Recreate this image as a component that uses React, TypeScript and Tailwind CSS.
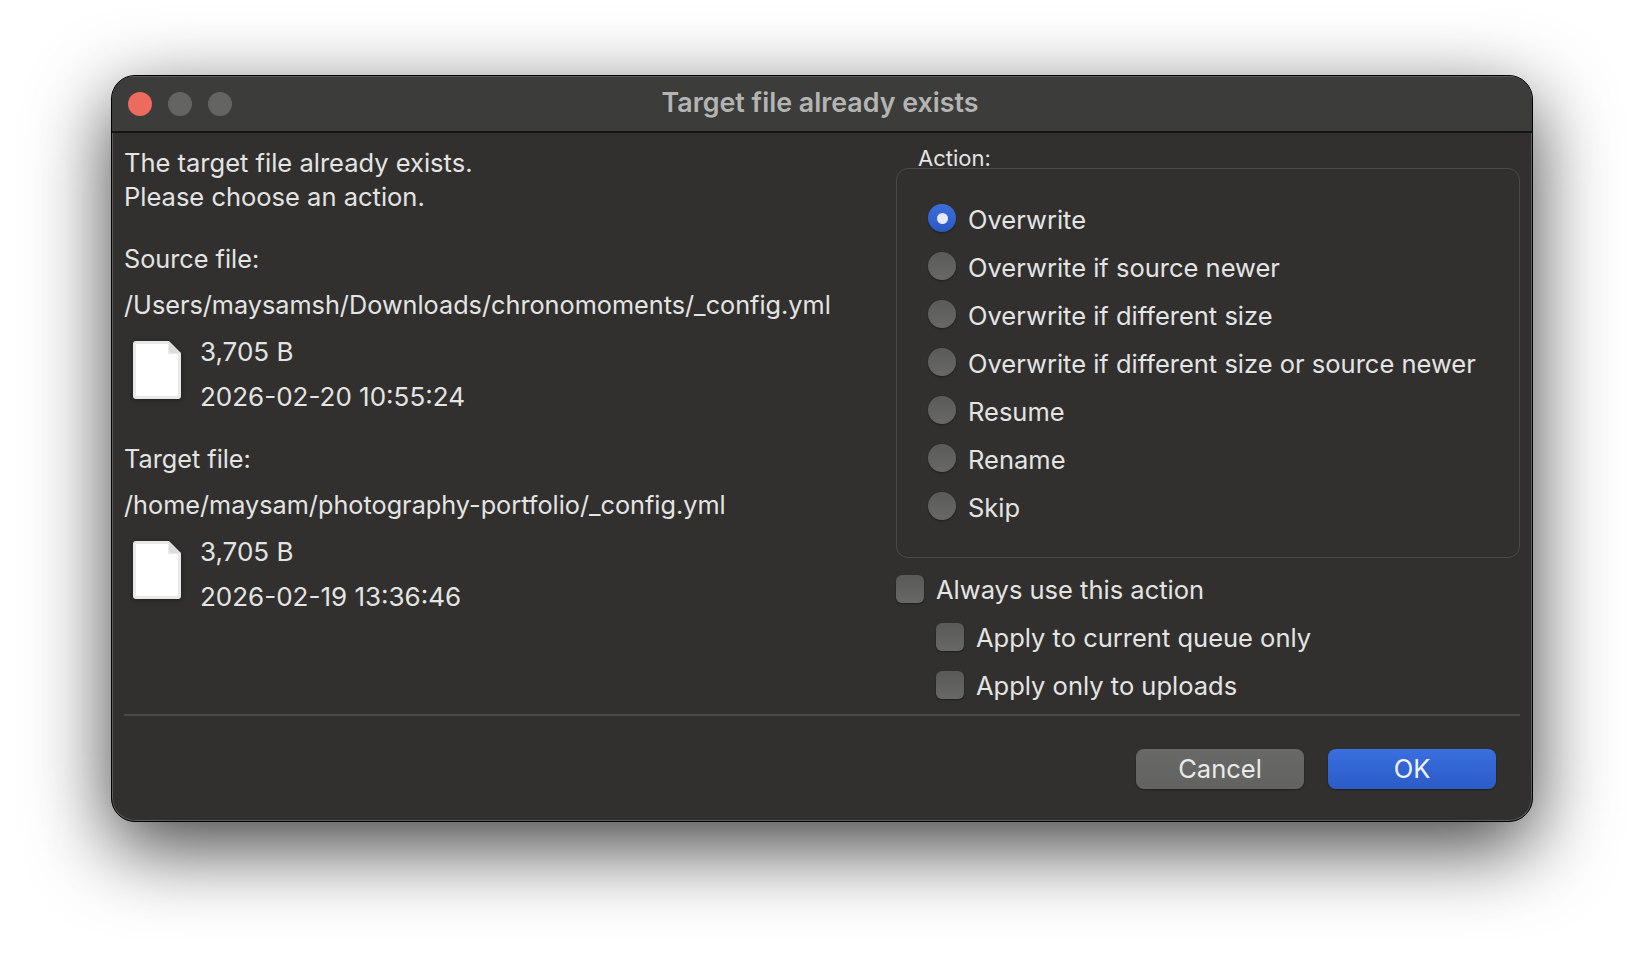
const radios = [
  "Overwrite",
  "Overwrite if source newer",
  "Overwrite if different size",
  "Overwrite if different size or source newer",
  "Resume",
  "Rename",
  "Skip",
];

function FileIcon() {
  return (
    <svg width="48" height="60" viewBox="0 0 48 60" className="mt-[12px] shrink-0 drop-shadow-[0_1px_2px_rgba(0,0,0,0.4)]">
      <path d="M3 0H36L48 12V55a3 3 0 0 1-3 3H3a3 3 0 0 1-3-3V3a3 3 0 0 1 3-3Z" fill="#e9e9e9" />
      <path d="M4 3H35V13H45V53a2 2 0 0 1-2 2H5a2 2 0 0 1-2-2V4a1 1 0 0 1 1-1Z" fill="#ffffff" />
      <path d="M36 1L47 12H38a2 2 0 0 1-2-2Z" fill="#dcdcdc" />
    </svg>
  );
}

function Radio({ checked, label }: { checked?: boolean; label: string }) {
  return (
    <div className="flex h-12 items-center gap-3">
      {checked ? (
        <span className="flex h-7 w-7 items-center justify-center rounded-full bg-gradient-to-b from-[#3c6fdc] to-[#2a58c0] shadow-[0_1px_2px_rgba(0,0,0,0.4)]">
          <span className="h-[11px] w-[11px] rounded-full bg-[#e4eafa]" />
        </span>
      ) : (
        <span className="h-7 w-7 rounded-full bg-gradient-to-b from-[#5a5a59] to-[#686867] shadow-[0_1px_2px_rgba(0,0,0,0.4)]" />
      )}
      <span className="mt-[4px]">{label}</span>
    </div>
  );
}

function Check({ label }: { label: string }) {
  return (
    <div className="flex h-12 items-center gap-3">
      <span className="h-7 w-7 rounded-md bg-gradient-to-b from-[#5a5a59] to-[#686867] shadow-[0_1px_2px_rgba(0,0,0,0.4)]" />
      <span className="mt-[2px]">{label}</span>
    </div>
  );
}

function FileBlock({ title, path, size, date }: { title: string; path: string; size: string; date: string }) {
  return (
    <div>
      <div className="flex h-[46px] items-center text-[25.25px]">{title}</div>
      <div className="flex h-[46px] items-center text-[25.25px]">{path}</div>
      <div className="flex items-start gap-[19px] pl-[9px]">
        <FileIcon />
        <div className="text-[26px]">
          <div className="flex h-[45px] items-center">{size}</div>
          <div className="flex h-[45px] items-center">{date}</div>
        </div>
      </div>
    </div>
  );
}

export default function App() {
  return (
    <div className="h-[970px] w-[1644px] overflow-hidden bg-white pl-[111px] pt-[75px] font-['Inter',sans-serif] text-[25.5px] text-[#e4e4e3]">
      <div className="flex h-[747px] w-[1422px] flex-col overflow-hidden rounded-3xl border border-black bg-[#31302f] shadow-[0_25px_80px_rgba(0,0,0,0.75),inset_0_0_0_1px_#5c5c5c]">
        <div className="flex h-[57px] shrink-0 items-center border-b-2 border-[#141414] bg-[#3c3c3b] px-4 shadow-[inset_0_1px_0_#5c5c5c]">
          <div className="flex gap-4">
            <span className="h-6 w-6 rounded-full bg-[#ec6a5e]" />
            <span className="h-6 w-6 rounded-full bg-[#646463]" />
            <span className="h-6 w-6 rounded-full bg-[#646463]" />
          </div>
          <div className="mt-[-2px] flex-1 pr-[108px] text-center text-[26.8px] font-semibold text-[#b4b4b3]">Target file already exists</div>
        </div>

        <div className="flex flex-1 flex-col px-3">
          <div className="flex h-[583px] shrink-0 border-b-2 border-[#4a4a49]">
            <div className="w-[772px] shrink-0 pt-[13px]">
              <div className="leading-[34px]">The target file already exists.<br />Please choose an action.</div>
              <div className="mt-[23px]">
                <FileBlock title="Source file:" path="/Users/maysamsh/Downloads/chronomoments/_config.yml" size="3,705 B" date="2026-02-20 10:55:24" />
              </div>
              <div className="mt-[18px]">
                <FileBlock title="Target file:" path="/home/maysam/photography-portfolio/_config.yml" size="3,705 B" date="2026-02-19 13:36:46" />
              </div>
            </div>

            <div className="flex-1">
              <div className="h-[35px] pl-[22px] pt-[11px] text-[22px] leading-[28px]">Action:</div>
              <div className="h-[390px] rounded-xl border border-[#4a4a49] pl-[31px] pt-[25px]">
                {radios.map((r, i) => (
                  <Radio key={r} label={r} checked={i === 0} />
                ))}
              </div>
              <div className="mt-[7px]">
                <Check label="Always use this action" />
                <div className="pl-10">
                  <Check label="Apply to current queue only" />
                  <Check label="Apply only to uploads" />
                </div>
              </div>
            </div>
          </div>

          <div className="flex justify-end gap-6 pr-6 pt-[33px]">
            <button className="h-10 w-[168px] rounded-lg bg-gradient-to-b from-[#696968] to-[#626261] text-[#eaeaea] shadow-[0_1px_2px_rgba(0,0,0,0.4)]">Cancel</button>
            <button className="h-10 w-[168px] rounded-lg bg-gradient-to-b from-[#3a6fdf] to-[#2b5cc7] text-[#f0f4ff] shadow-[0_1px_2px_rgba(0,0,0,0.4)]">OK</button>
          </div>
        </div>
      </div>
    </div>
  );
}
